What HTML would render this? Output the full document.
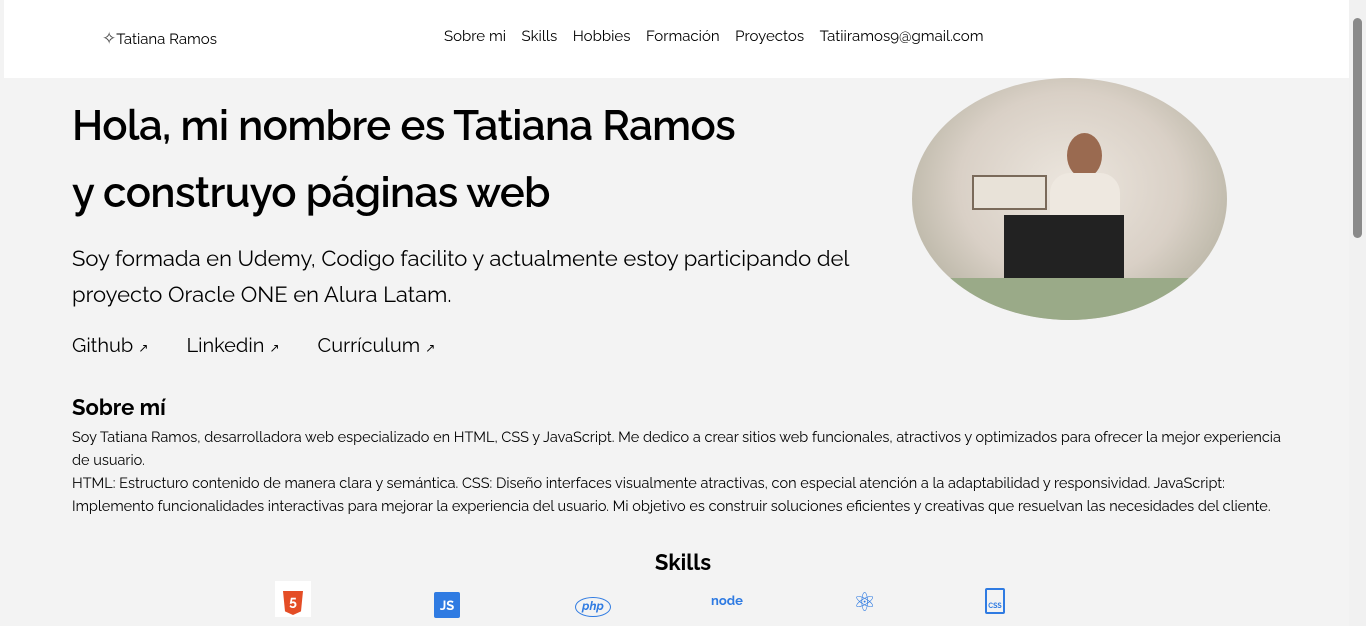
<!DOCTYPE html>
<html><head><meta charset="utf-8"><style>
*{margin:0;padding:0;box-sizing:border-box}
body{width:1366px;height:626px;overflow:hidden;background:#f3f3f3;font-family:"Raleway","Liberation Sans",sans-serif;color:#000;position:relative}
.sb{position:absolute;right:0;top:0;width:17px;height:626px;background:#f1f1f1}
.sb div{position:absolute;left:4px;top:18px;width:9px;height:220px;background:#8a8a8a;border-radius:5px}
header{position:absolute;left:4px;top:0;width:1345px;height:78px;background:#fff}
.logo{position:absolute;left:98px;top:28px;font-size:15px}
.logo b{font-size:17px;font-weight:normal;color:#444}
nav{position:absolute;left:440px;top:27px;font-size:15px}
nav span{margin-right:15.5px}
.a{position:absolute;left:72px}
h1{font-size:42px;font-weight:600;letter-spacing:-0.6px}
.sub{font-size:22px;line-height:36px}
.links{font-size:20px}
.links span{margin-right:38px}
.links small{font-size:12px}
p.t{font-size:14.5px;line-height:23px;width:1230px}
.photo{position:absolute;left:912px;top:78px;width:315px;height:242px;border-radius:50%;background:radial-gradient(ellipse at 50% 45%,#ece6de 0%,#d9d0c6 50%,#b8b4a4 80%,#9aa88a 100%);overflow:hidden}
</style></head><body>
<header>
<div class="logo"><b>✧</b>Tatiana Ramos</div>
<nav><span>Sobre mi</span><span>Skills</span><span>Hobbies</span><span>Formación</span><span>Proyectos</span><span>Tatiiramos9@gmail.com</span></nav>
</header>
<h1 class="a" style="top:101px">Hola, mi nombre es Tatiana Ramos</h1>
<h1 class="a" style="top:168px">y construyo páginas web</h1>
<div class="a sub" style="top:241px">Soy formada en Udemy, Codigo facilito y actualmente estoy participando del<br>proyecto Oracle ONE en Alura Latam.</div>
<div class="a links" style="top:333px"><span>Github <small>↗</small></span><span>Linkedin <small>↗</small></span><span>Currículum <small>↗</small></span></div>
<div class="a" style="top:395px;font-size:22px;font-weight:bold">Sobre mí</div>
<p class="a t" style="top:426px">Soy Tatiana Ramos, desarrolladora web especializado en HTML, CSS y JavaScript. Me dedico a crear sitios web funcionales, atractivos y optimizados para ofrecer la mejor experiencia de usuario.<br>HTML: Estructuro contenido de manera clara y semántica. CSS: Diseño interfaces visualmente atractivas, con especial atención a la adaptabilidad y responsividad. JavaScript: Implemento funcionalidades interactivas para mejorar la experiencia del usuario. Mi objetivo es construir soluciones eficientes y creativas que resuelvan las necesidades del cliente.</p>
<div style="position:absolute;left:0;width:1366px;top:550px;text-align:center;font-size:22px;font-weight:bold">Skills</div>
<div class="photo">
<div style="position:absolute;left:60px;top:97px;width:75px;height:35px;background:#e8e2d8;border:2px solid #7a6a5a"></div>
<div style="position:absolute;left:155px;top:55px;width:35px;height:45px;border-radius:50%;background:#9a6a50"></div>
<div style="position:absolute;left:138px;top:95px;width:70px;height:90px;background:#eee8e0;border-radius:20px 20px 0 0"></div>
<div style="position:absolute;left:92px;top:137px;width:120px;height:85px;background:#222"></div>
<div style="position:absolute;left:0;top:200px;width:315px;height:42px;background:#9aaa88"></div>
</div>
<div style="position:absolute;left:275px;top:581px;width:36px;height:36px;background:#fff"><div style="position:absolute;left:8px;top:10px;width:20px;height:24px;background:#e44d26;clip-path:polygon(0 0,100% 0,90% 85%,50% 100%,10% 85%);color:#fff;font-size:14px;font-weight:bold;text-align:center;line-height:22px">5</div></div>
<div style="position:absolute;left:434px;top:592px;width:26px;height:26px;background:#2f7be2;border-radius:2px;color:#fff;font-size:13px;font-weight:bold;text-align:center;padding-top:7px">JS</div>
<div style="position:absolute;left:575px;top:597px;width:36px;height:20px;border:1.5px solid #2f7be2;border-radius:50%;color:#2f7be2;font-size:12px;font-style:italic;font-weight:bold;text-align:center;line-height:17px">php</div>
<div style="position:absolute;left:711px;top:594px;color:#2f7be2;font-size:13px;font-weight:bold">node</div>
<div style="position:absolute;left:853px;top:590px;color:#2f7be2;font-size:26px;line-height:26px">⚛</div>
<div style="position:absolute;left:985px;top:588px;width:20px;height:26px;border:2px solid #2f7be2;border-radius:2px;color:#2f7be2;font-size:7px;font-weight:bold;text-align:center;padding-top:11px">CSS</div>
<div class="sb"><div></div></div>
</body></html>
